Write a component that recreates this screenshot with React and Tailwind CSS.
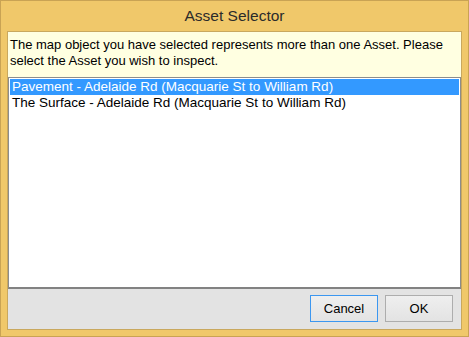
import React, { useState } from 'react';

const assets = [
  'Pavement - Adelaide Rd (Macquarie St to William Rd)',
  'The Surface - Adelaide Rd (Macquarie St to William Rd)',
];

export default function App() {
  const [selected, setSelected] = useState(0);

  return (
    <div
      className="w-[469px] h-[337px] bg-[#f0c86a] border border-[#c9a354] flex flex-col"
      style={{ fontFamily: '"Liberation Sans", Arial, sans-serif' }}
    >
      {/* Title bar */}
      <div className="h-[30px] flex items-center justify-center text-[15.5px] text-[#2b2b2b]">
        Asset Selector
      </div>

      {/* Client area */}
      <div className="mx-[6px] mb-[6px] flex-1 flex flex-col border border-[#c9a85e] bg-[#e3e3e3]">
        <div className="bg-[#ffffe1] px-[2px] pt-[5px] pb-[8px] text-[13px] leading-[16px] text-black">
          The map object you have selected represents more than one Asset. Please select the Asset you wish to inspect.
        </div>

        {/* List */}
        <div className="flex-1 bg-white border border-[#8c8c8c] border-b-2 border-b-[#828282] p-px">
          {assets.map((a, i) => (
            <div
              key={a}
              onClick={() => setSelected(i)}
              className={
                'h-[16px] px-[2px] text-[13.5px] leading-[16px] whitespace-nowrap ' +
                (selected === i ? 'bg-[#3399ff] text-white' : 'text-black')
              }
            >
              {a}
            </div>
          ))}
        </div>

        {/* Buttons */}
        <div className="h-[40px] flex items-start justify-end gap-[7px] pt-[6px] pr-[8px]">
          <button className="w-[68px] h-[27px] border border-[#3c97f0] bg-gradient-to-b from-[#efefef] to-[#e3e3e3] text-[13px] text-black">
            Cancel
          </button>
          <button className="w-[68px] h-[27px] border border-[#adadad] bg-gradient-to-b from-[#efefef] to-[#e3e3e3] text-[13px] text-black">
            OK
          </button>
        </div>
      </div>
    </div>
  );
}
